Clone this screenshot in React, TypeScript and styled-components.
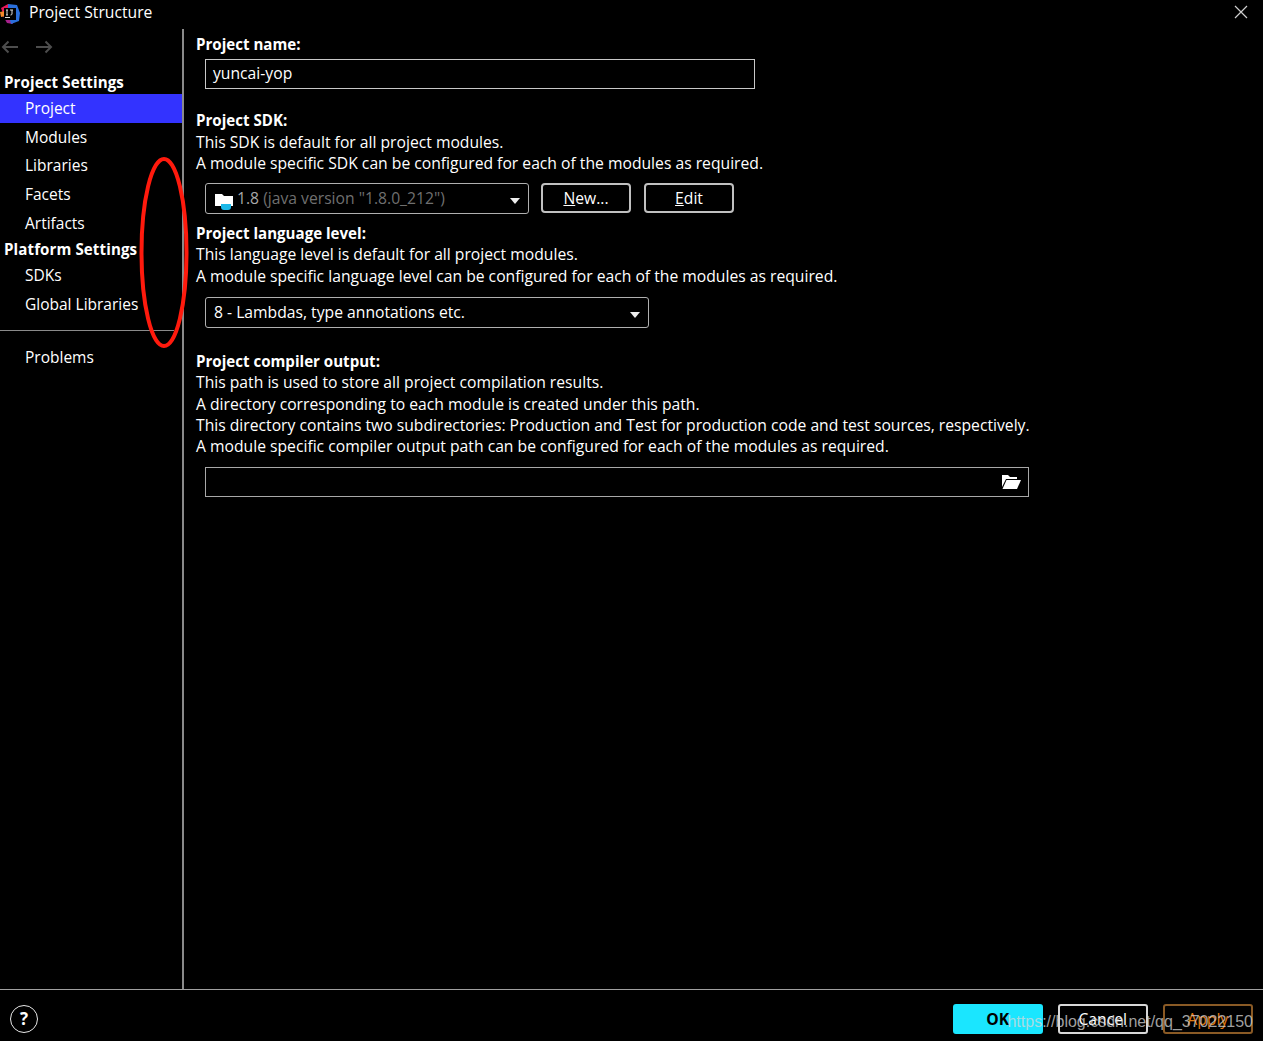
import React from "react";
import styled, { createGlobalStyle } from "styled-components";

const GlobalStyle = createGlobalStyle`
    html, body {
        margin: 0;
        padding: 0;
        background: #000;
    }
    body {
        font-family: "Open Sans", "Noto Sans", "Liberation Sans", sans-serif;
        color: #fff;
    }
`;

const projectItems = ["Project", "Modules", "Libraries", "Facets", "Artifacts"];
const platformItems = ["SDKs", "Global Libraries"];

export default function App() {
    return (
        <Window>
            <GlobalStyle />
            <TitleBar>
                <AppLogo />
                <WindowTitle>Project Structure</WindowTitle>
                <CloseIcon />
            </TitleBar>
            <Body>
                <Sidebar>
                    <NavArrows>
                        <ArrowIcon />
                        <ArrowIcon $flip />
                    </NavArrows>
                    <SectionTitle>Project Settings</SectionTitle>
                    {projectItems.map((item) => (
                        <NavItem key={item} $active={item === "Project"}>
                            {item}
                        </NavItem>
                    ))}
                    <SectionTitle>Platform Settings</SectionTitle>
                    {platformItems.map((item) => (
                        <NavItem key={item}>{item}</NavItem>
                    ))}
                    <SidebarRule />
                    <NavItem>Problems</NavItem>
                </Sidebar>
                <Main>
                    <Label>Project name:</Label>
                    <TextField $width={550}>yuncai-yop</TextField>

                    <Label $top={21}>Project SDK:</Label>
                    <Line>This SDK is default for all project modules.</Line>
                    <Line>
                        A module specific SDK can be configured for each of the
                        modules as required.
                    </Line>
                    <ControlRow $top={9}>
                        <Select $width={324}>
                            <SdkIcon />
                            <SelectText>
                                <Version>1.8</Version>{" "}
                                <Muted>(java version "1.8.0_212")</Muted>
                            </SelectText>
                            <Caret />
                        </Select>
                        <OutlineButton>
                            <u>N</u>ew...
                        </OutlineButton>
                        <OutlineButton>
                            <u>E</u>dit
                        </OutlineButton>
                    </ControlRow>

                    <Label $top={9}>Project language level:</Label>
                    <Line>This language level is default for all project modules.</Line>
                    <Line>
                        A module specific language level can be configured for
                        each of the modules as required.
                    </Line>
                    <ControlRow $top={10}>
                        <Select $width={444}>
                            <SelectText>8 - Lambdas, type annotations etc.</SelectText>
                            <Caret />
                        </Select>
                    </ControlRow>

                    <Label $top={23}>Project compiler output:</Label>
                    <Line>This path is used to store all project compilation results.</Line>
                    <Line>A directory corresponding to each module is created under this path.</Line>
                    <Line>
                        This directory contains two subdirectories: Production and
                        Test for production code and test sources, respectively.
                    </Line>
                    <Line>
                        A module specific compiler output path can be configured
                        for each of the modules as required.
                    </Line>
                    <PathField>
                        <FolderIcon />
                    </PathField>
                </Main>
            </Body>
            <Footer>
                <HelpButton>?</HelpButton>
                <FooterButtons>
                    <DialogButton $variant="ok">OK</DialogButton>
                    <DialogButton>Cancel</DialogButton>
                    <DialogButton $variant="apply">Apply</DialogButton>
                </FooterButtons>
            </Footer>
            <Watermark>https://blog.csdn.net/qq_37022150</Watermark>
            <Annotation viewBox="0 0 50 193">
                <ellipse cx="25" cy="96.5" rx="22.5" ry="93.5" />
            </Annotation>
        </Window>
    );
}

const AppLogo = () => (
    <LogoSvg viewBox="0 0 20 20">
        <path d="M1 4 L8 0 L10 6 L4 12 Z" fill="#e5175b" />
        <path d="M2 10 L7 19 L13 20 L8 9 Z" fill="#a8208c" />
        <path d="M8 0 L17 1 L20 9 L19 17 L11 20 L8 9 Z" fill="#2a6fdc" />
        <path d="M0 8 L5 7 L6 12 L1 13 Z" fill="#f5892a" />
        <rect x="4" y="4" width="12" height="12" fill="#000" />
        <rect x="5" y="13" width="5" height="1" fill="#ddd" />
        <path d="M6 6 H8 M7 6 V11 M6 11 H8 M10 6 H13 M12 6 V10 Q12 11 10.5 11" stroke="#ddd" strokeWidth="1" fill="none" />
    </LogoSvg>
);

const CloseIcon = () => (
    <CloseSvg viewBox="0 0 14 14">
        <path d="M1 1 L13 13 M13 1 L1 13" />
    </CloseSvg>
);

const ArrowIcon = ({ $flip }: { $flip?: boolean }) => (
    <ArrowSvg viewBox="0 0 18 14" $flip={$flip}>
        <path d="M17 7 H2 M7.5 1.5 L2 7 L7.5 12.5" />
    </ArrowSvg>
);

const SdkIcon = () => (
    <IconSvg viewBox="0 0 20 20">
        <path d="M1 3 H8 L10 5 H19 V15 H1 Z" fill="#fff" />
        <path d="M7 13 H17 V16 Q17 19 14 19 H10 Q7 19 7 16 Z" fill="#1cb8e8" />
    </IconSvg>
);

const FolderIcon = () => (
    <FolderSvg viewBox="0 0 20 16">
        <path d="M1 1 H7 L9 3 H16 V5 H5 L1 13 Z" fill="#fff" />
        <path d="M5.5 6 H20 L16 15 H1.5 Z" fill="#fff" />
    </FolderSvg>
);

const Window = styled.div`
    position: relative;
    display: flex;
    flex-direction: column;
    height: 1041px;
    overflow: hidden;
    background: #000;
    font-size: 15.7px;
`;

const TitleBar = styled.div`
    display: flex;
    align-items: center;
    height: 29px;
    padding: 0 15px 5px 0;
    box-sizing: border-box;
`;

const LogoSvg = styled.svg`
    width: 20px;
    height: 20px;
    margin: 3px 9px 0 0;
`;

const WindowTitle = styled.span`
    flex: 1;
`;

const CloseSvg = styled.svg`
    width: 14px;
    height: 14px;
    fill: none;
    stroke: #cfcfcf;
    stroke-width: 1.2;
`;

const Body = styled.div`
    flex: 1;
    display: flex;
    min-height: 0;
`;

const Sidebar = styled.nav`
    width: 182px;
    flex-shrink: 0;
    border-right: 2px solid #8a8a8a;
    box-sizing: content-box;
    font-size: 15.5px;
`;

const NavArrows = styled.div`
    display: flex;
    gap: 16px;
    height: 41px;
    padding: 11px 0 0 1px;
    box-sizing: border-box;
`;

const ArrowSvg = styled.svg<{ $flip?: boolean }>`
    width: 18px;
    height: 14px;
    fill: none;
    stroke: #4d4d4d;
    stroke-width: 2;
    transform: ${({ $flip }) => ($flip ? "scaleX(-1)" : "none")};
`;

const SectionTitle = styled.div`
    height: 24px;
    line-height: 24px;
    padding-left: 4px;
    font-size: 15.1px;
    font-weight: 700;
    letter-spacing: 0.1px;
`;

const NavItem = styled.div<{ $active?: boolean }>`
    height: 28.7px;
    line-height: 28.7px;
    padding-left: 25px;
    background: ${({ $active }) => ($active ? "#3333ff" : "transparent")};
`;

const SidebarRule = styled.hr`
    height: 1px;
    margin: 11.5px 8px 11.5px 0;
    border: 0;
    background: #8a8a8a;
`;

const Main = styled.main`
    flex: 1;
    display: flex;
    flex-direction: column;
    align-items: flex-start;
    padding: 5px 0 0 12px;
`;

const Label = styled.div<{ $top?: number }>`
    font-size: 15.1px;
    font-weight: 700;
    line-height: 21.3px;
    margin-top: ${({ $top }) => $top ?? 0}px;
`;

const Line = styled.div`
    line-height: 21.3px;
`;

const TextField = styled.div<{ $width: number }>`
    width: ${({ $width }) => $width}px;
    height: 30px;
    line-height: 27px;
    margin: 4px 0 0 9px;
    padding: 0 7px;
    box-sizing: border-box;
    border: 1px solid #c8c8c8;
`;

const ControlRow = styled.div<{ $top: number }>`
    display: flex;
    gap: 12px;
    margin: ${({ $top }) => $top}px 0 0 9px;
`;

const Select = styled.div<{ $width: number }>`
    display: flex;
    align-items: center;
    width: ${({ $width }) => $width}px;
    height: 31px;
    padding-left: 8px;
    box-sizing: border-box;
    border: 1px solid #b0b0b0;
    border-radius: 3px;
`;

const IconSvg = styled.svg`
    width: 20px;
    height: 20px;
    margin: 5px 3px 0 0;
`;

const SelectText = styled.span`
    flex: 1;
    padding-bottom: 2px;
`;

const Version = styled.span`
    color: #a8a8a8;
`;

const Muted = styled.span`
    color: #6f6f6f;
`;

const Caret = styled.span`
    width: 0;
    height: 0;
    margin: 5px 8px 0 0;
    border-left: 5px solid transparent;
    border-right: 5px solid transparent;
    border-top: 6px solid #eee;
`;

const OutlineButton = styled.button`
    width: 90px;
    height: 30px;
    padding: 0;
    background: #000;
    color: #fff;
    font: inherit;
    border: 2px solid #c0c0c0;
    border-radius: 4px;
    & + & {
        margin-left: 1px;
    }
`;

const PathField = styled.div`
    display: flex;
    align-items: center;
    justify-content: flex-end;
    width: 824px;
    height: 30px;
    margin: 9px 0 0 9px;
    padding-right: 7px;
    box-sizing: border-box;
    border: 1px solid #a8a8a8;
`;

const FolderSvg = styled.svg`
    width: 20px;
    height: 16px;
`;

const Footer = styled.footer`
    display: flex;
    align-items: center;
    justify-content: space-between;
    height: 52px;
    padding: 6px 10px 0;
    box-sizing: border-box;
    border-top: 1px solid #a0a0a0;
`;

const HelpButton = styled.div`
    width: 26px;
    height: 26px;
    line-height: 26px;
    text-align: center;
    border: 1.5px solid #e8e8e8;
    border-radius: 50%;
    font-size: 17px;
    font-weight: 700;
`;

const variantStyles = {
    ok: "background: #1ae6ff; color: #000; border-color: #1ae6ff; font-weight: 700;",
    apply: "color: #e07a10; border-color: #8a5a25;",
    default: "color: #fff; border-color: #d8d8d8;",
};

const FooterButtons = styled.div`
    display: flex;
    gap: 14.5px;
`;

const DialogButton = styled.button<{ $variant?: "ok" | "apply" }>`
    width: 90.5px;
    height: 30px;
    padding: 0;
    background: #000;
    font: inherit;
    border: 2px solid;
    border-radius: 3px;
    ${({ $variant }) => variantStyles[$variant ?? "default"]}
`;

const Watermark = styled.div`
    position: absolute;
    right: 10px;
    bottom: 10px;
    font-family: "Liberation Sans", Arial, sans-serif;
    font-size: 16px;
    color: rgba(215, 215, 215, 0.75);
`;

const Annotation = styled.svg`
    position: absolute;
    left: 139px;
    top: 156px;
    width: 50px;
    height: 193px;
    fill: none;
    stroke: #ff1a0d;
    stroke-width: 4;
`;
